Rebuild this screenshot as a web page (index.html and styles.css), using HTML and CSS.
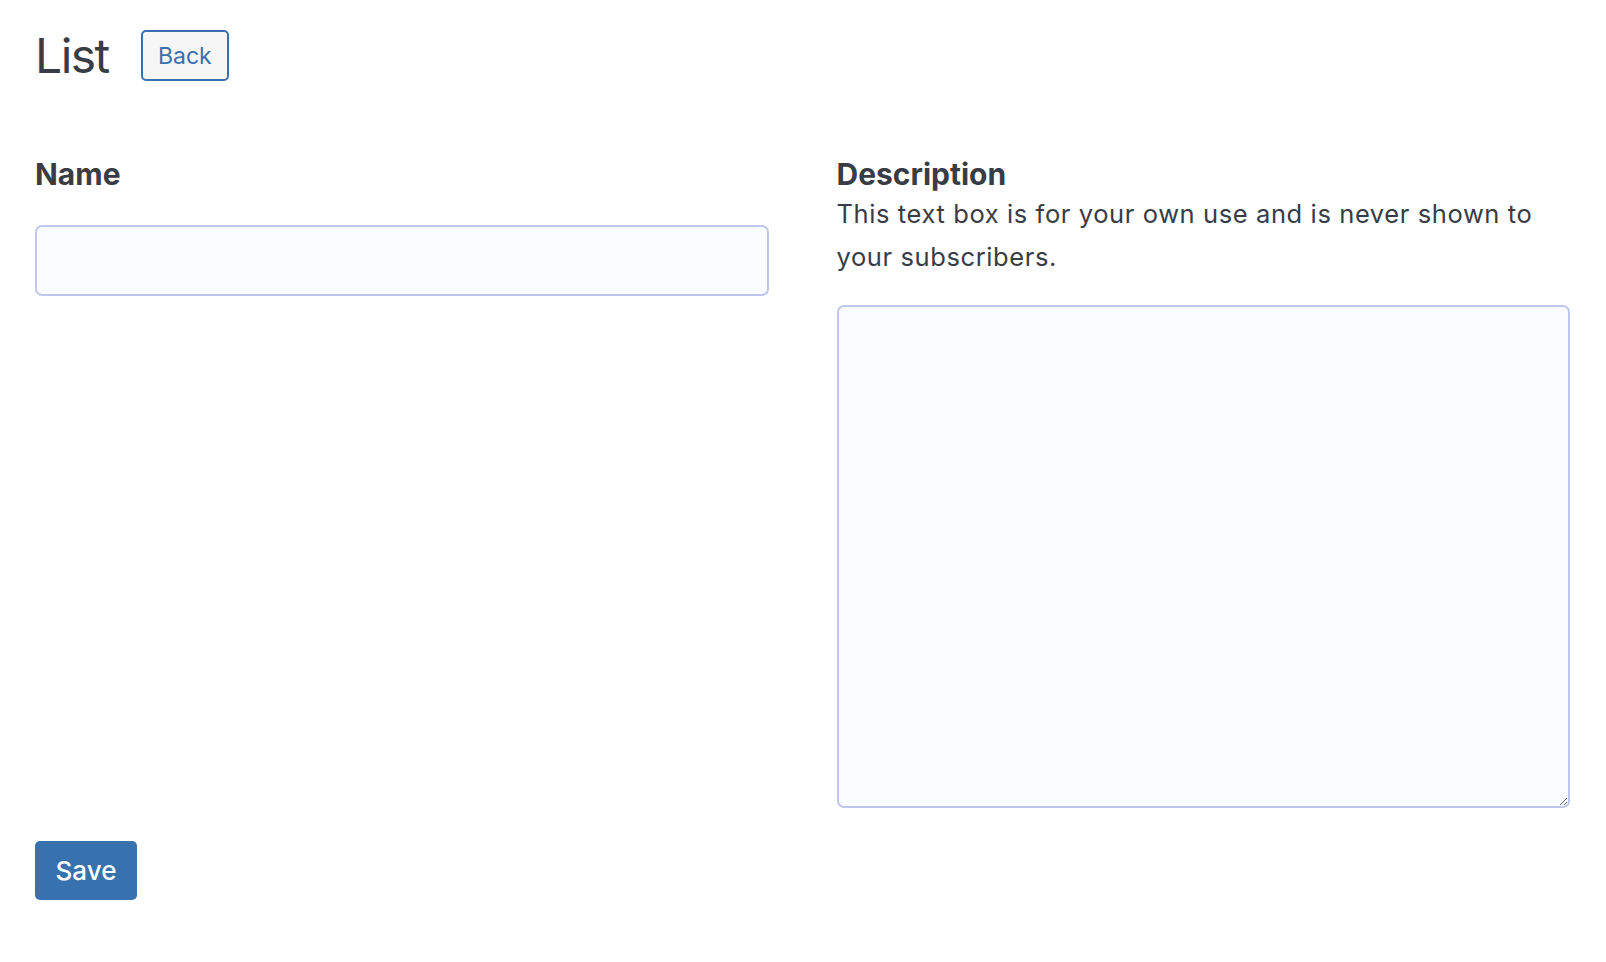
FILE: index.html
```html
<!DOCTYPE html>
<html lang="en">
<head>
<meta charset="utf-8">
<title>List</title>
<link rel="stylesheet" href="styles.css">
</head>
<body>
<div class="page">
  <header class="header">
    <h1 class="title">List</h1>
    <button class="btn-back" type="button">Back</button>
  </header>
  <form class="form">
    <div class="fields">
      <div class="field">
        <label class="label" for="name">Name</label>
        <input class="input" id="name" type="text">
      </div>
      <div class="field">
        <label class="label" for="desc">Description</label>
        <p class="help">This text box is for your own use and is never shown to your subscribers.</p>
        <textarea class="textarea" id="desc"></textarea>
      </div>
    </div>
    <button class="btn-save" type="submit">Save</button>
  </form>
</div>
</body>
</html>
```

FILE: styles.css
```css
* { box-sizing: border-box; }
html, body { margin: 0; background: #ffffff; }
body {
  font-family: Inter, "Noto Sans", "Liberation Sans", sans-serif;
  color: #383d45;
}
.page {
  padding: 30px 36px 30px 35px;
}
.header {
  display: flex;
  align-items: center;
  gap: 32px;
  height: 51px;
}
.title {
  margin: 0;
  font-size: 48px;
  font-weight: 400;
  line-height: 51px;
  letter-spacing: -1.5px;
}
.btn-back {
  height: 51px;
  width: 88px;
  padding: 0;
  border: 2px solid #3a6fb0;
  border-radius: 5px;
  background: #f6f6f6;
  color: #3a6fb0;
  font-family: inherit;
  font-size: 23px;
}
.form {
  margin-top: 75px;
}
.fields {
  display: grid;
  grid-template-columns: 1fr 1fr;
  column-gap: 68px;
}
.field {
  display: flex;
  flex-direction: column;
}
.label {
  font-size: 30px;
  font-weight: 700;
  line-height: 36px;
}
.help {
  margin: 0;
  font-size: 25.5px;
  letter-spacing: 0.6px;
  line-height: 43px;
}
.input {
  margin-top: 33px;
  height: 71px;
  border: 2px solid #bfc7ec;
  border-radius: 7px;
  background: #fbfcff;
  font-family: inherit;
  font-size: 25px;
  padding: 0 16px;
}
.textarea {
  margin-top: 27px;
  height: 503px;
  border: 2px solid #bfc7ec;
  border-radius: 7px;
  background: #fbfcff;
  font-family: inherit;
  font-size: 25px;
  padding: 12px 16px;
  resize: vertical;
}
.btn-save {
  margin-top: 33px;
  width: 102px;
  height: 59px;
  padding: 0;
  border: none;
  border-radius: 5px;
  background: #3771ae;
  color: #ffffff;
  font-family: inherit;
  font-size: 26px;
  font-weight: 500;
}
```
